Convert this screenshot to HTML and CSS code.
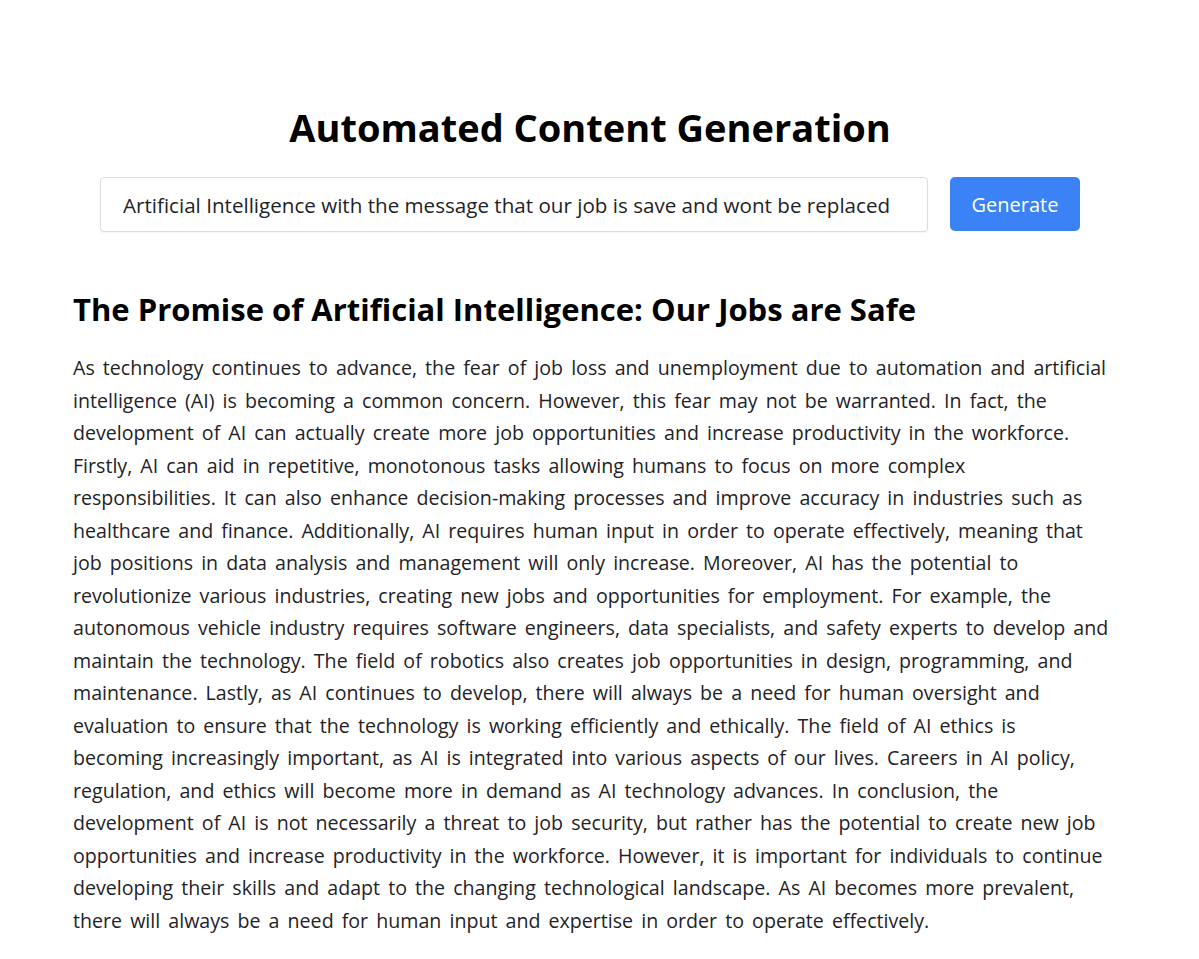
FILE: index.html
```html
<!DOCTYPE html>
<html lang="en">
<head>
<meta charset="utf-8">
<title>Automated Content Generation</title>
<link rel="stylesheet" href="styles.css">
</head>
<body>
<main class="page">
  <h1 class="title">Automated Content Generation</h1>
  <form class="prompt-form">
    <input class="prompt-input" type="text" value="Artificial Intelligence with the message that our job is save and wont be replaced">
    <button class="generate-btn" type="button">Generate</button>
  </form>
  <article class="result">
    <h2 class="result-title">The Promise of Artificial Intelligence: Our Jobs are Safe</h2>
    <p class="result-body">As technology continues to advance, the fear of job loss and unemployment due to automation and artificial intelligence (AI) is becoming a common concern. However, this fear may not be warranted. In fact, the development of AI can actually create more job opportunities and increase productivity in the workforce. Firstly, AI can aid in repetitive, monotonous tasks allowing humans to focus on more complex responsibilities. It can also enhance decision-making processes and improve accuracy in industries such as healthcare and finance. Additionally, AI requires human input in order to operate effectively, meaning that job positions in data analysis and management will only increase. Moreover, AI has the potential to revolutionize various industries, creating new jobs and opportunities for employment. For example, the autonomous vehicle industry requires software engineers, data specialists, and safety experts to develop and maintain the technology. The field of robotics also creates job opportunities in design, programming, and maintenance. Lastly, as AI continues to develop, there will always be a need for human oversight and evaluation to ensure that the technology is working efficiently and ethically. The field of AI ethics is becoming increasingly important, as AI is integrated into various aspects of our lives. Careers in AI policy, regulation, and ethics will become more in demand as AI technology advances. In conclusion, the development of AI is not necessarily a threat to job security, but rather has the potential to create new job opportunities and increase productivity in the workforce. However, it is important for individuals to continue developing their skills and adapt to the changing technological landscape. As AI becomes more prevalent, there will always be a need for human input and expertise in order to operate effectively.</p>
  </article>
</main>
</body>
</html>
```
FILE: styles.css
```css
* { box-sizing: border-box; }
body {
  margin: 0;
  background: #ffffff;
  font-family: "Open Sans", "Noto Sans", sans-serif;
  color: #1f2328;
}
.page {
  width: 1040px;
  margin-left: 70px;
  padding-top: 100px;
}
.title {
  margin: 0;
  text-align: center;
  font-size: 38px;
  line-height: 54px;
  font-weight: 700;
  color: #000;
}
.prompt-form {
  width: 980px;
  margin: 23px auto 0;
  display: flex;
  gap: 22px;
}
.prompt-input {
  flex: 1;
  height: 55px;
  padding: 0 22px;
  border: 1px solid #dcdde1;
  border-radius: 4px;
  font-family: inherit;
  font-size: 20.6px;
  color: #1f2328;
  box-shadow: 0 1px 2px rgba(0,0,0,0.05);
}
.generate-btn {
  width: 130px;
  height: 54px;
  border: none;
  border-radius: 5px;
  background: #3b82f6;
  color: #fff;
  font-family: inherit;
  font-size: 20px;
}
.result {
  margin-top: 55px;
  padding-left: 3px;
}
.result-title {
  margin: 0;
  font-size: 31px;
  line-height: 44px;
  font-weight: 700;
  color: #000;
}
.result-body {
  margin: 21px 0 0;
  font-size: 19.62px;
  word-spacing: 3px;
  line-height: 32.5px;
}
```
